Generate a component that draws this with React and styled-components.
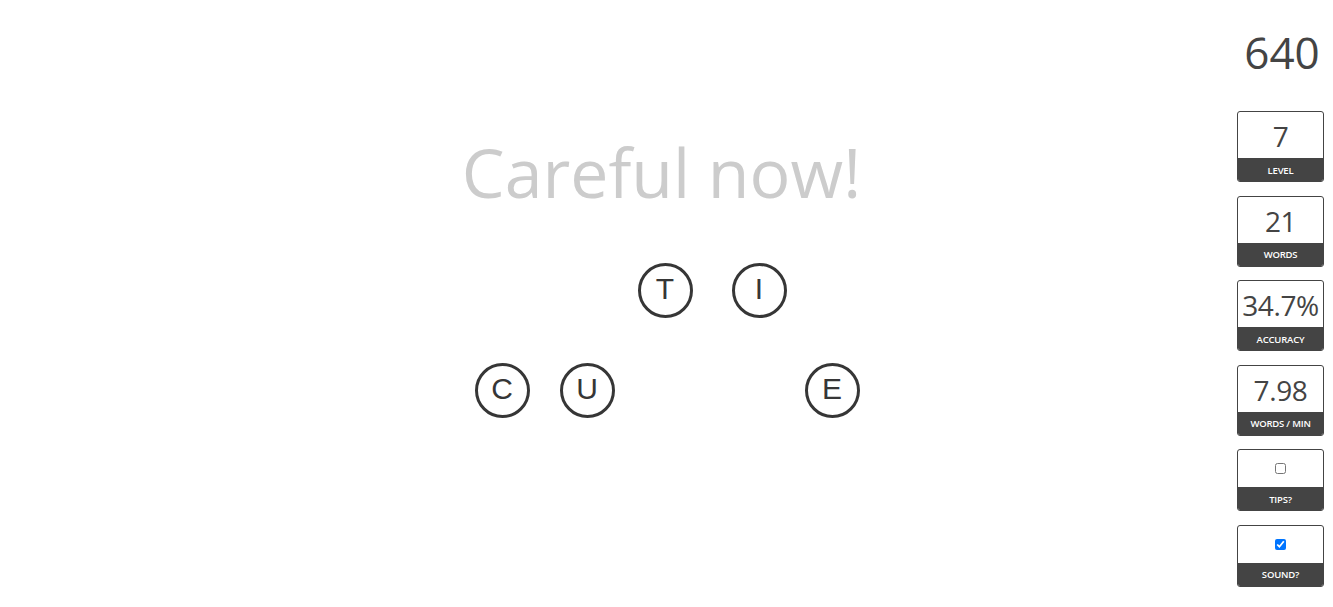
import styled, { createGlobalStyle } from "styled-components";

const GlobalStyle = createGlobalStyle`
  html, body {
    margin: 0;
    padding: 0;
    background: #fff;
  }
  body {
    font-family: "Open Sans", "Noto Sans", sans-serif;
    color: #444;
  }
`;

const Page = styled.div`
  display: flex;
  min-height: 607px;
  padding-right: 9px;
  box-sizing: border-box;
`;

const Main = styled.main`
  flex: 1;
  display: flex;
  flex-direction: column;
  align-items: center;
  padding: 138px 0 0 86px;
`;

const Title = styled.h1`
  margin: 0;
  font-size: 68px;
  font-weight: 400;
  line-height: 1;
  color: #cccccc;
  white-space: nowrap;
`;

const Board = styled.div`
  position: relative;
  width: 400px;
  height: 160px;
  margin-top: 57px;
`;

const Tile = styled.div`
  position: absolute;
  width: 55px;
  height: 55px;
  box-sizing: border-box;
  border: 3px solid #363636;
  border-radius: 50%;
  display: flex;
  align-items: center;
  justify-content: center;
  font-family: "Liberation Sans", Arial, sans-serif;
  font-size: 30px;
  color: #363636;
  padding-bottom: 3px;
`;

const Sidebar = styled.aside`
  width: 87px;
  display: flex;
  flex-direction: column;
  align-items: stretch;
  padding-top: 30px;
`;

const Score = styled.div`
  font-size: 44px;
  line-height: 1;
  text-align: center;
  color: #444;
  margin: 0 -3px 37px 0;
`;

const Stack = styled.div`
  display: flex;
  flex-direction: column;
  gap: 13.5px;
`;

const Box = styled.div`
  border: 1px solid #444;
  border-radius: 3px;
  overflow: hidden;
  display: flex;
  flex-direction: column;
`;

const Value = styled.div`
  height: ${(p) => (p.$check ? "37px" : "46px")};
  padding-top: ${(p) => (p.$check ? "0" : "2px")};
  box-sizing: border-box;
  display: flex;
  align-items: center;
  justify-content: center;
  font-size: 28px;
  line-height: 44px;
  color: #444;
  letter-spacing: -0.4px;
  white-space: nowrap;

  input {
    margin: 0;
    width: 11px;
    height: 11px;
  }
`;

const Label = styled.div`
  height: 23px;
  padding-top: 1px;
  box-sizing: border-box;
  background: #444;
  color: #fff;
  font-size: 9.5px;
  font-weight: 600;
  letter-spacing: -0.2px;
  text-transform: uppercase;
  display: flex;
  align-items: center;
  justify-content: center;
  white-space: nowrap;
`;

const tiles = [
  { ch: "T", x: 176, y: 0 },
  { ch: "I", x: 270, y: 0 },
  { ch: "C", x: 13, y: 100 },
  { ch: "U", x: 98, y: 100 },
  { ch: "E", x: 343, y: 100 },
];

const stats = [
  { value: "7", label: "Level" },
  { value: "21", label: "Words" },
  { value: "34.7%", label: "Accuracy" },
  { value: "7.98", label: "Words / min" },
];

export default function App() {
  return (
    <>
      <GlobalStyle />
      <Page>
        <Main>
          <Title>Careful now!</Title>
          <Board>
            {tiles.map((t) => (
              <Tile key={t.ch} style={{ left: t.x, top: t.y }}>
                {t.ch}
              </Tile>
            ))}
          </Board>
        </Main>
        <Sidebar>
          <Score>640</Score>
          <Stack>
            {stats.map((s) => (
              <Box key={s.label}>
                <Value>{s.value}</Value>
                <Label>{s.label}</Label>
              </Box>
            ))}
            <Box>
              <Value $check>
                <input type="checkbox" />
              </Value>
              <Label>Tips?</Label>
            </Box>
            <Box>
              <Value $check>
                <input type="checkbox" defaultChecked />
              </Value>
              <Label>Sound?</Label>
            </Box>
          </Stack>
        </Sidebar>
      </Page>
    </>
  );
}
